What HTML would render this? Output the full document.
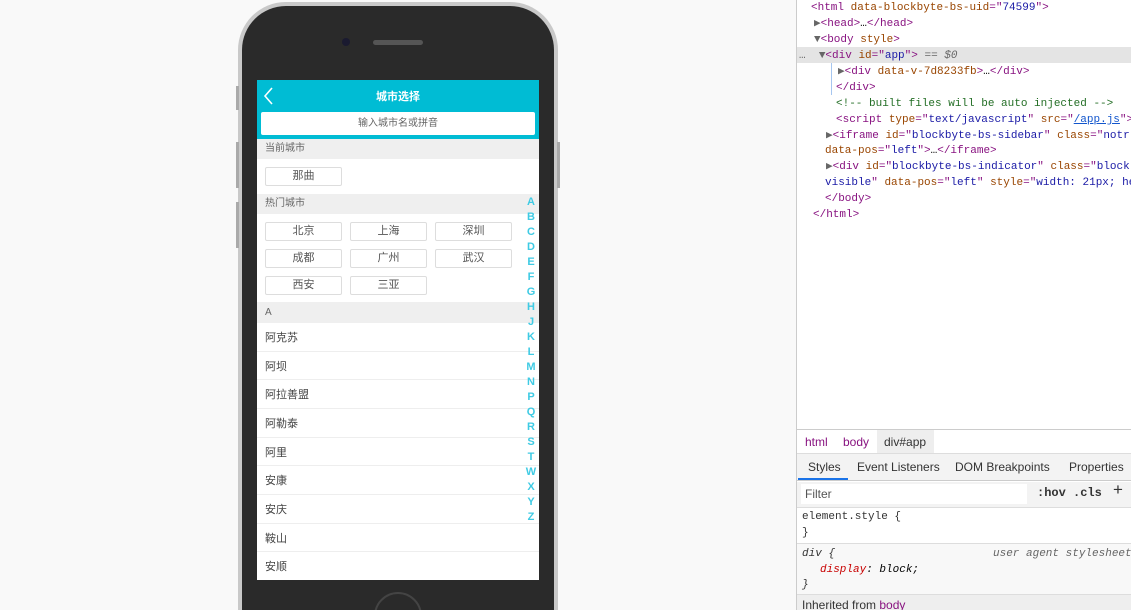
<!DOCTYPE html>
<html style="overflow:hidden;width:1131px;height:610px"><head><meta charset="utf-8"><style>
*{margin:0;padding:0;box-sizing:border-box}
body{width:1131px;height:610px;overflow:hidden;background:#f9f9f9;position:relative;font-family:"Liberation Sans","Noto Sans CJK SC",sans-serif}
.abs{position:absolute}
.btn{position:absolute;width:77px;height:19px;border:1px solid #ddd;border-radius:2px;background:#fff;font-size:11px;color:#555;text-align:center;line-height:17px}
.sec{position:absolute;left:257px;width:282px;background:#efefef;font-size:10px;color:#666;padding-left:8px}
.list{position:absolute;left:257px;top:323px;width:282px;height:257px;background:#fff;display:flex;flex-direction:column}
.row{flex:1;border-bottom:1px solid #eee;font-size:11px;color:#444;padding-left:8px;display:flex;align-items:center}
.idx{position:absolute;left:524px;width:14px;text-align:center;font-size:11px;font-weight:bold;color:#3fcbe4;line-height:15px}
.dt{position:absolute;left:0;font-family:"Liberation Mono",monospace;font-size:11px;white-space:pre;line-height:16px}
.tg{color:#881280}.at{color:#994500}.av{color:#1a1aa6}.cm{color:#236e25}.gy{color:#666}
</style></head><body>
<div style="position:absolute;left:0;top:0;width:1131px;height:610px;overflow:hidden">
<div class="abs" style="left:238px;top:2px;width:320px;height:608px;border-radius:48px 48px 0 0;background:#c9c9c9"></div>
<div class="abs" style="left:242px;top:6px;width:312px;height:604px;border-radius:44px 44px 0 0;background:#2a2a2a"></div>
<div class="abs" style="left:236px;top:86px;width:3px;height:24px;background:#aaa"></div>
<div class="abs" style="left:236px;top:142px;width:3px;height:46px;background:#aaa"></div>
<div class="abs" style="left:236px;top:202px;width:3px;height:46px;background:#aaa"></div>
<div class="abs" style="left:557px;top:142px;width:3px;height:46px;background:#aaa"></div>
<div class="abs" style="left:342px;top:38px;width:8px;height:8px;border-radius:50%;background:#1a1a30"></div>
<div class="abs" style="left:373px;top:40px;width:50px;height:5px;border-radius:3px;background:#555"></div>
<div class="abs" style="left:370px;top:590px;width:56px;height:20px;overflow:hidden"><div style="margin:2px 0 0 4px;width:48px;height:48px;border-radius:50%;border:2px solid #444"></div></div>
<div class="abs" style="left:257px;top:80px;width:282px;height:500px;background:#fff"></div>
<div class="abs" style="left:257px;top:80px;width:282px;height:59px;background:#00bcd4"></div>
<svg class="abs" style="left:262px;top:86px" width="14" height="20"><path d="M10 2 L3 10 L10 18" stroke="#fff" stroke-width="1.6" fill="none"/></svg>
<div class="abs" style="left:257px;top:88px;width:282px;text-align:center;color:#fff;font-size:11px;font-weight:bold">城市选择</div>
<div class="abs" style="left:261px;top:112px;width:274px;height:23px;background:#fff;border-radius:2px;text-align:center;font-size:10px;color:#666;line-height:23px">输入城市名或拼音</div>
<div class="sec" style="top:139px;height:20px;line-height:20px">当前城市</div>
<div class="btn" style="left:265px;top:167px">那曲</div>
<div class="sec" style="top:194px;height:20px;line-height:20px">热门城市</div>
<div class="btn" style="left:265px;top:222px">北京</div>
<div class="btn" style="left:350px;top:222px">上海</div>
<div class="btn" style="left:435px;top:222px">深圳</div>
<div class="btn" style="left:265px;top:249px">成都</div>
<div class="btn" style="left:350px;top:249px">广州</div>
<div class="btn" style="left:435px;top:249px">武汉</div>
<div class="btn" style="left:265px;top:276px">西安</div>
<div class="btn" style="left:350px;top:276px">三亚</div>
<div class="sec" style="top:302px;height:21px;line-height:21px">A</div>
<div class="list">
<div class="row">阿克苏</div><div class="row">阿坝</div><div class="row">阿拉善盟</div><div class="row">阿勒泰</div><div class="row">阿里</div><div class="row">安康</div><div class="row">安庆</div><div class="row">鞍山</div><div class="row" style="border:none">安顺</div>
</div>
<div class="idx" style="top:195px">A<br>B<br>C<br>D<br>E<br>F<br>G<br>H<br>J<br>K<br>L<br>M<br>N<br>P<br>Q<br>R<br>S<br>T<br>W<br>X<br>Y<br>Z</div>
<div class="abs" style="left:796px;top:0;width:335px;height:610px;background:#fff;border-left:1px solid #ccc;overflow:hidden">
 <div class="abs" style="left:0;top:47px;width:335px;height:16px;background:#e4e4e4"></div>
 <div class="abs" style="left:34px;top:63px;width:1px;height:32px;background:#a6c6f0"></div>
 <div class="dt" style="top:0px;left:14px"><span class="tg">&lt;html</span> <span class="at">data-blockbyte-bs-uid</span><span class="tg">="</span><span class="av">74599</span><span class="tg">"&gt;</span></div>
 <div class="dt" style="top:16px;left:17px"><span class="gy">▶</span><span class="tg">&lt;head&gt;</span>…<span class="tg">&lt;/head&gt;</span></div>
 <div class="dt" style="top:32px;left:17px"><span class="gy">▼</span><span class="tg">&lt;body</span> <span class="at">style</span><span class="tg">&gt;</span></div>
 <div class="dt" style="top:48px;left:2px"><span class="gy">…</span>  <span class="gy">▼</span><span class="tg">&lt;div</span> <span class="at">id</span><span class="tg">="</span><span class="av">app</span><span class="tg">"&gt;</span> <span class="gy">== <i>$0</i></span></div>
 <div class="dt" style="top:64px;left:41px"><span class="gy">▶</span><span class="tg">&lt;div</span> <span class="at">data-v-7d8233fb</span><span class="tg">&gt;</span>…<span class="tg">&lt;/div&gt;</span></div>
 <div class="dt" style="top:80px;left:39px"><span class="tg">&lt;/div&gt;</span></div>
 <div class="dt" style="top:96px;left:39px"><span class="cm">&lt;!-- built files will be auto injected --&gt;</span></div>
 <div class="dt" style="top:112px;left:39px"><span class="tg">&lt;script</span> <span class="at">type</span><span class="tg">="</span><span class="av">text/javascript</span><span class="tg">"</span> <span class="at">src</span><span class="tg">="</span><span style="color:#1155cc;text-decoration:underline">/app.js</span><span class="tg">"&gt;</span></div>
 <div class="dt" style="top:128px;left:29px"><span class="gy">▶</span><span class="tg">&lt;iframe</span> <span class="at">id</span><span class="tg">="</span><span class="av">blockbyte-bs-sidebar</span><span class="tg">"</span> <span class="at">class</span><span class="tg">="</span><span class="av">notr</span></div>
 <div class="dt" style="top:143px;left:28px"><span class="at">data-pos</span><span class="tg">="</span><span class="av">left</span><span class="tg">"&gt;</span>…<span class="tg">&lt;/iframe&gt;</span></div>
 <div class="dt" style="top:159px;left:29px"><span class="gy">▶</span><span class="tg">&lt;div</span> <span class="at">id</span><span class="tg">="</span><span class="av">blockbyte-bs-indicator</span><span class="tg">"</span> <span class="at">class</span><span class="tg">="</span><span class="av">block</span></div>
 <div class="dt" style="top:175px;left:28px"><span class="av">visible</span><span class="tg">"</span> <span class="at">data-pos</span><span class="tg">="</span><span class="av">left</span><span class="tg">"</span> <span class="at">style</span><span class="tg">="</span><span class="av">width: 21px; he</span></div>
 <div class="dt" style="top:191px;left:28px"><span class="tg">&lt;/body&gt;</span></div>
 <div class="dt" style="top:207px;left:16px"><span class="tg">&lt;/html&gt;</span></div>
 <div class="abs" style="left:0;top:429px;width:335px;height:1px;background:#ccc"></div>
 <div class="abs" style="left:0;top:430px;width:335px;height:24px;font-size:12px;line-height:24px">
  <span class="abs" style="left:8px;color:#881280">html</span><span class="abs" style="left:46px;color:#881280">body</span><span class="abs" style="left:80px;width:57px;height:24px;background:#eee;padding-left:7px;color:#333">div#app</span></div>
 <div class="abs" style="left:0;top:453px;width:335px;height:1px;background:#ddd"></div>
 <div class="abs" style="left:0;top:454px;width:335px;height:27px;background:#f3f3f3;border-bottom:1px solid #ccc;font-size:12px;line-height:26px;color:#333">
  <span class="abs" style="left:11px">Styles</span><span class="abs" style="left:60px">Event Listeners</span><span class="abs" style="left:158px">DOM Breakpoints</span><span class="abs" style="left:272px">Properties</span>
  <div class="abs" style="left:1px;top:24px;width:50px;height:2px;background:#1a73e8"></div></div>
 <div class="abs" style="left:0;top:482px;width:335px;height:26px;background:#f3f3f3;border-bottom:1px solid #ddd"></div>
 <div class="abs" style="left:4px;top:484px;width:226px;height:20px;background:#fff;font-size:12px;color:#555;padding-left:4px;line-height:20px">Filter</div>
 <div class="abs" style="left:240px;top:486px;font-family:'Liberation Mono',monospace;font-size:12px;color:#333;font-weight:bold">:hov  .cls</div>
 <div class="abs" style="left:316px;top:480px;font-size:17px;color:#333;line-height:20px">+</div>
 <div class="dt" style="top:509px;left:5px;color:#333">element.style {</div>
 <div class="dt" style="top:525px;left:5px;color:#333">}</div>
 <div class="abs" style="left:0;top:543px;width:335px;height:1px;background:#ddd"></div>
 <div class="abs" style="left:0;top:544px;width:335px;height:50px;background:#f8f8f8"></div>
 <div class="dt" style="top:546px;left:5px;color:#333"><i>div {</i></div>
 <div class="dt" style="top:546px;left:196px;color:#666"><i>user agent stylesheet</i></div>
 <div class="dt" style="top:562px;left:23px"><i><span style="color:#c80000">display</span>: block;</i></div>
 <div class="dt" style="top:577px;left:5px;color:#333"><i>}</i></div>
 <div class="abs" style="left:0;top:594px;width:335px;height:16px;background:#eee;border-top:1px solid #ddd;font-size:12px;color:#333;padding-left:5px;line-height:20px;overflow:hidden">Inherited from <span style="color:#881280">body</span></div>
</div>
</div>
</body></html>
